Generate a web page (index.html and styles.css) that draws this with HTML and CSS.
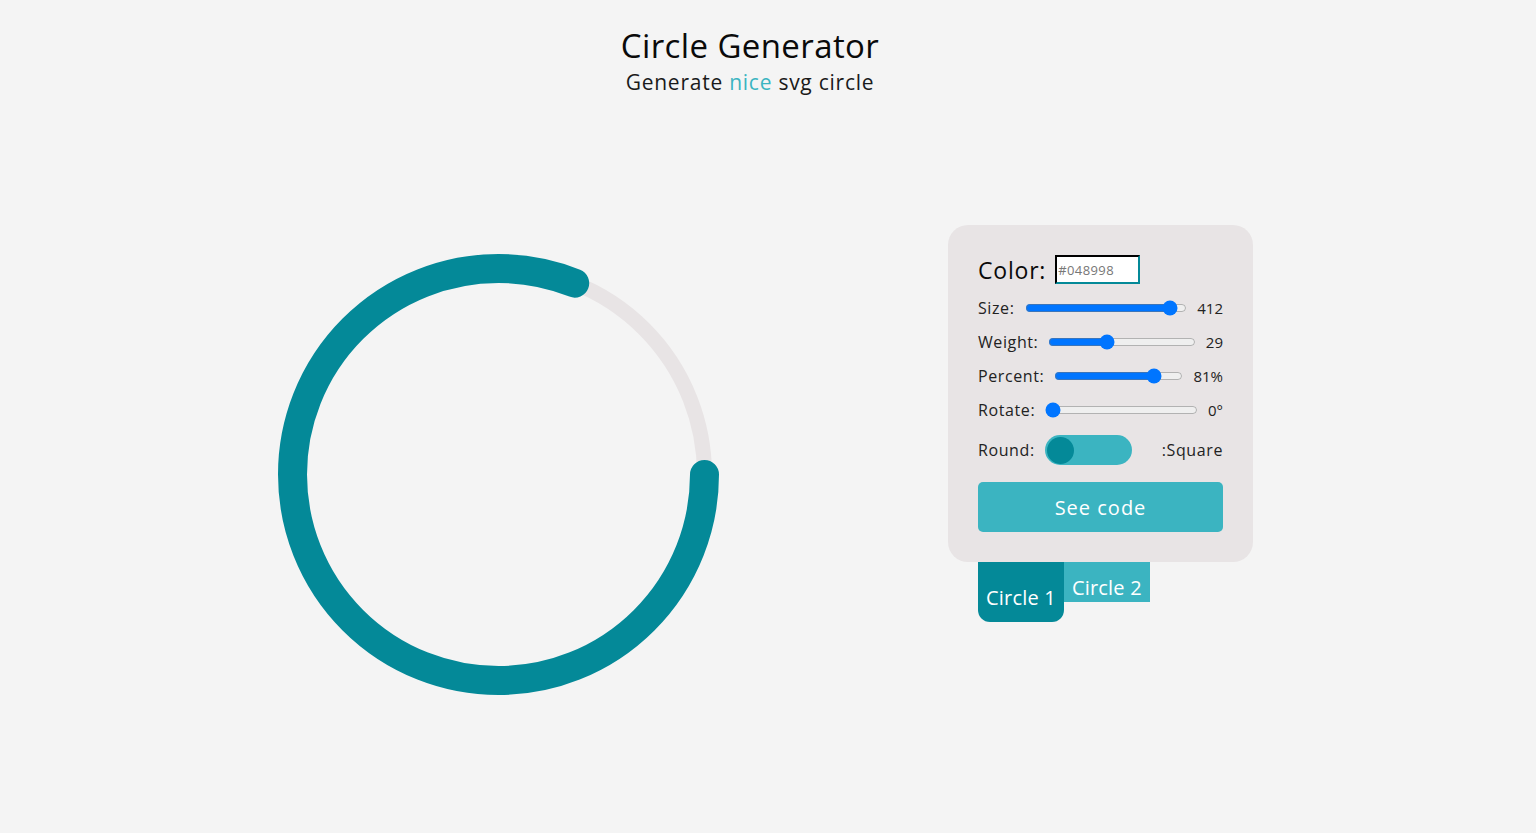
FILE: index.html
```html
<!DOCTYPE html>
<html lang="en">
<head>
<meta charset="utf-8">
<title>Circle Generator</title>
<link rel="stylesheet" href="styles.css">
</head>
<body>
<header class="header">
  <h1 class="title">Circle Generator</h1>
  <p class="subtitle">Generate <span class="accent">nice</span> svg circle</p>
</header>
<main class="main">
  <div class="preview">
    <svg class="ring" width="441" height="441" viewBox="0 0 441 441">
      <circle cx="220.5" cy="220.5" r="206" fill="none" stroke="#e8e4e5" stroke-width="15"/>
      <circle cx="220.5" cy="220.5" r="206" fill="none" stroke="#048998" stroke-width="29" stroke-linecap="round" stroke-dasharray="1048.4 1294.3"/>
    </svg>
  </div>
  <section class="controls">
    <div class="panel">
      <div class="row color-row">
        <span class="color-label">Color:</span>
        <input class="color-input" type="text" placeholder="#048998">
      </div>
      <div class="row">
        <span class="label">Size:</span>
        <input class="range" type="range" min="0" max="440" value="412">
        <span class="value">412</span>
      </div>
      <div class="row">
        <span class="label">Weight:</span>
        <input class="range" type="range" min="0" max="75" value="29">
        <span class="value">29</span>
      </div>
      <div class="row">
        <span class="label">Percent:</span>
        <input class="range" type="range" min="0" max="100" value="81">
        <span class="value">81%</span>
      </div>
      <div class="row">
        <span class="label">Rotate:</span>
        <input class="range" type="range" min="0" max="360" value="0">
        <span class="value">0°</span>
      </div>
      <div class="row round-row">
        <span class="label">Round:</span>
        <span class="toggle"><span class="knob"></span></span>
        <span class="label">:Square</span>
      </div>
      <button class="see-code" type="button">See code</button>
    </div>
    <div class="tabs">
      <span class="tab tab-active">Circle 1</span>
      <span class="tab">Circle 2</span>
    </div>
  </section>
</main>
</body>
</html>
```
FILE: styles.css
```css
* { box-sizing: border-box; }
html, body { margin: 0; padding: 0; }
body {
  background: #f4f4f4;
  font-family: "Open Sans", "DejaVu Sans", sans-serif;
  color: #111;
  height: 833px;
  overflow: hidden;
}
.header {
  text-align: center;
  padding: 24px 36px 0 0;
}
.title {
  margin: 0;
  font-size: 33px;
  font-weight: 500;
  line-height: 44px;
  letter-spacing: 0.4px;
  color: #0a0a0a;
}
.subtitle {
  margin: 0;
  font-size: 21px;
  line-height: 28px;
  letter-spacing: 0.75px;
  color: #1a1a1a;
}
.accent { color: #3bb4c1; }

.main {
  display: flex;
  align-items: flex-start;
  padding-left: 278px;
  margin-top: 129px;
}
.preview {
  margin-top: 29px;
  width: 441px;
  height: 441px;
}
.ring { display: block; }
.controls {
  margin-left: 229px;
}
.panel {
  width: 305px;
  background: #e8e4e5;
  border-radius: 20px;
  padding: 30px;
  display: flex;
  flex-direction: column;
}
.row {
  display: flex;
  align-items: center;
  height: 34px;
  font-size: 15px;
}
.color-row {
  height: 29px;
  margin-bottom: 7px;
}
.color-label {
  font-size: 23px;
  letter-spacing: 0.8px;
  margin-right: 9px;
  color: #0a0a0a;
}
.color-input {
  width: 85px;
  height: 29px;
  border: 2px inset #048998;
  border-top-color: #0b4a50;
  border-left-color: #0b4a50;
  background: #fff;
  font-family: inherit;
  font-size: 13px;
  letter-spacing: 0.4px;
  padding: 0 1px;
  outline: none;
}
.color-input::placeholder { color: #777; }
.label {
  color: #222;
  font-size: 16px;
  letter-spacing: 0.6px;
}
.range {
  flex: 1;
  margin: 0 10px;
  min-width: 0;
}
.value {
  color: #222;
  text-align: right;
}
.round-row {
  height: 30px;
  margin-top: 8px;
  justify-content: space-between;
}
.toggle {
  width: 87px;
  height: 30px;
  border-radius: 15px;
  background: #3bb4c1;
  padding: 2px;
  display: flex;
  align-items: center;
  margin-right: auto;
  margin-left: 10px;
}
.knob {
  width: 27px;
  height: 27px;
  border-radius: 50%;
  background: #048998;
}
.see-code {
  margin-top: 17px;
  height: 50px;
  border: none;
  border-radius: 5px;
  background: #3bb4c1;
  color: #fff;
  font-family: inherit;
  font-size: 20px;
  letter-spacing: 1px;
}
.tabs {
  display: flex;
  align-items: flex-start;
  padding-left: 30px;
}
.tab {
  display: block;
  background: #3bb4c1;
  color: #fff;
  font-size: 20px;
  line-height: 24px;
  letter-spacing: 0.2px;
  height: 40px;
  padding: 14px 8px 2px;
}
.tab-active {
  background: #048998;
  height: 60px;
  padding: 24px 8px 0;
  border-radius: 0 0 12px 12px;
}
```
